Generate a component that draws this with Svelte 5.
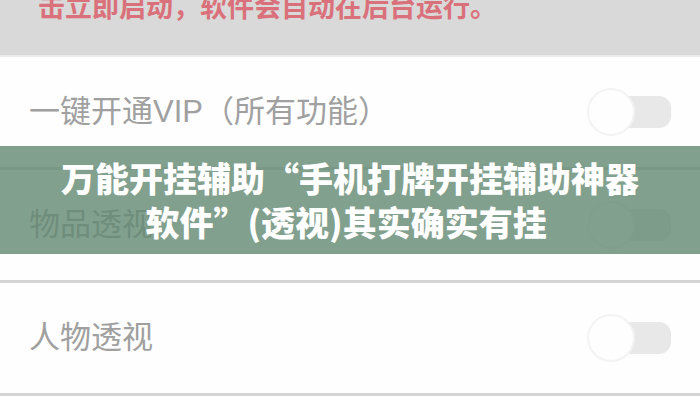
<script lang="ts">
	let options = [
		{ id: 'vip', label: '一键开通VIP（所有功能）', enabled: false },
		{ id: 'items', label: '物品透视', enabled: false },
		{ id: 'people', label: '人物透视', enabled: false }
	];
</script>

<main class="page" lang="zh-CN">
	<div class="notice">
		<p>击立即启动，软件会自动在后台运行。</p>
	</div>

	<div class="options">
		{#each options as option}
			<div class="option">
				<label for={option.id}>{option.label}</label>
				<input id={option.id} class="switch" type="checkbox" bind:checked={option.enabled} />
			</div>
		{/each}
	</div>

	<div class="overlay">
		<h1>万能开挂辅助“手机打牌开挂辅助神器软件”(透视)其实确实有挂&nbsp;</h1>
	</div>
</main>

<style>
	:global(body) {
		margin: 0;
		background: #fefefe;
	}

	.page {
		position: relative;
		min-height: 100vh;
		overflow: hidden;
		font-family: 'Noto Sans CJK SC', 'Noto Sans', sans-serif;
	}

	.notice {
		height: 55px;
		padding: 0 38px;
		background: #d9d9d9;
		border-bottom: 2px solid #ebebeb;
	}

	.notice p {
		margin: 0;
		font-size: 27px;
		line-height: 12px;
		font-weight: 700;
		color: #d9707a;
		white-space: nowrap;
	}

	.option {
		display: flex;
		align-items: center;
		justify-content: space-between;
		height: 110px;
		padding: 0 29px;
		border-bottom: 3px solid #d4d4d4;
	}

	.option label {
		font-family: 'Liberation Sans', 'Noto Sans CJK SC', sans-serif;
		font-size: 31px;
		line-height: 40px;
		color: #a0a0a0;
	}

	.switch {
		appearance: none;
		display: flex;
		align-items: center;
		flex: none;
		width: 72px;
		height: 32px;
		margin: 0;
		border-radius: 12px;
		background: #e8e8e8;
	}

	.switch::before {
		content: '';
		flex: none;
		box-sizing: border-box;
		width: 48px;
		height: 48px;
		margin-left: -12px;
		border: 2px solid #f3f3f3;
		border-radius: 50%;
		background: #fefefe;
	}

	.switch:checked {
		background: #82a08e;
	}

	.switch:checked::before {
		margin-left: 36px;
	}

	.overlay {
		position: absolute;
		inset: 0;
		display: flex;
		align-items: center;
		pointer-events: none;
	}

	h1 {
		flex: 1;
		margin: 0;
		padding: 10px 50px;
		background: rgba(99, 136, 114, 0.8);
		color: #fff;
		font-size: 34px;
		line-height: 44px;
		font-weight: 900;
		text-align: center;
	}
</style>
